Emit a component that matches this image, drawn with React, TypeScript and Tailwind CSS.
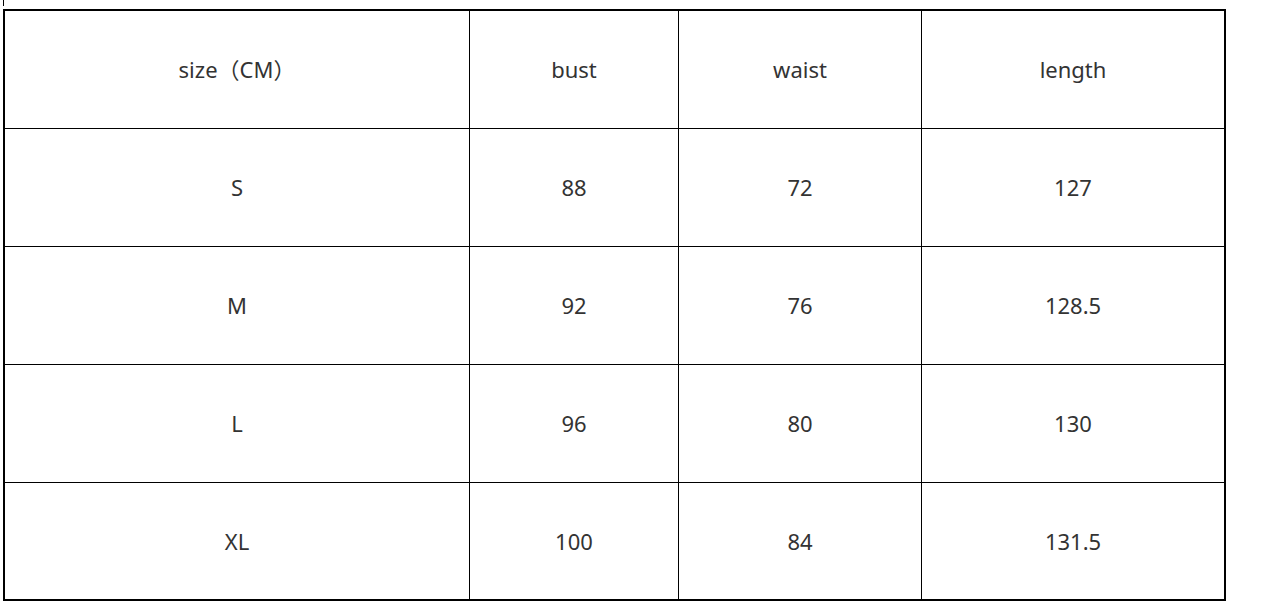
const header = ["size（CM）", "bust", "waist", "length"];
const rows = [
  ["S", "88", "72", "127"],
  ["M", "92", "76", "128.5"],
  ["L", "96", "80", "130"],
  ["XL", "100", "84", "131.5"],
];

export default function App() {
  const all = [header, ...rows];
  return (
    <div className="w-[1269px] h-[608px] bg-white pl-[3px] text-[#333]" style={{ fontFamily: '"Noto Sans", "Noto Sans CJK SC", sans-serif' }}>
      <div className="w-px h-[6px] bg-black" />
      <div className="mt-[3px] w-[1223px] border-2 border-black grid grid-cols-[465px_209px_243px_302px]">
        {all.map((r, i) =>
          r.map((c, j) => (
            <div
              key={i + "-" + j}
              className={
                "flex items-center justify-center text-[22px] border-black " +
                (j < 3 ? "border-r " : "") +
                (i < all.length - 1 ? "h-[118px] border-b" : "h-[116px]")
              }
            >
              {c}
            </div>
          ))
        )}
      </div>
    </div>
  );
}
